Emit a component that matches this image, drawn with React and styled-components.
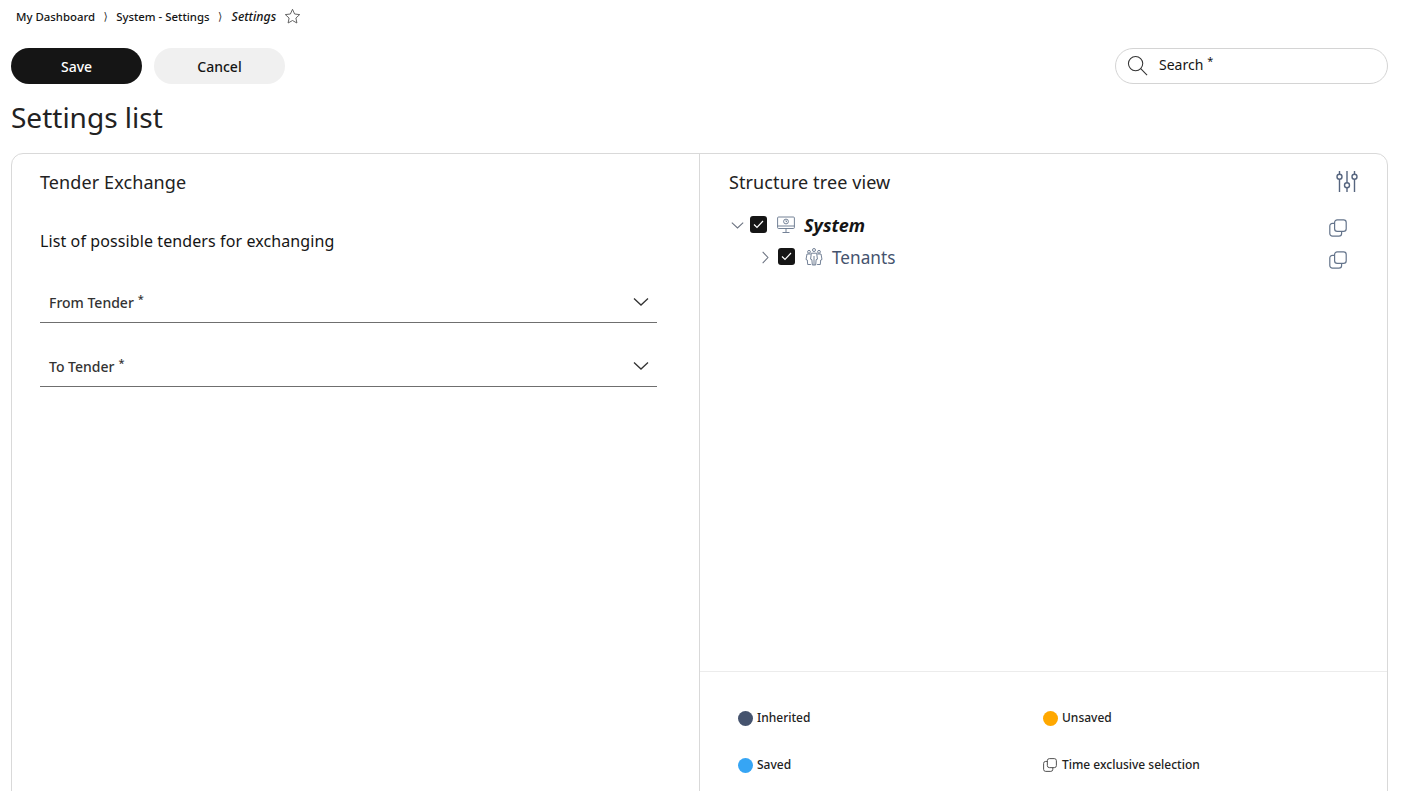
import React from 'react';
import styled, { createGlobalStyle } from 'styled-components';

const Global = createGlobalStyle`
  html, body {
    margin: 0;
    padding: 0;
    height: 100%;
    overflow: hidden;
    background: #fff;
    font-family: "Noto Sans", sans-serif;
    color: #151515;
  }
`;

const Page = styled.div`
  width: 1406px;
  height: 791px;
  overflow: hidden;
  box-sizing: border-box;
  padding: 0 18px 0 11px;
`;

const Crumbs = styled.nav`
  display: flex;
  align-items: center;
  height: 33px;
  padding-left: 5px;
  font-size: 11.4px;
  font-weight: 500;
`;

const Crumb = styled.span`
  font-style: ${p => (p.$current ? 'italic' : 'normal')};
  font-size: ${p => (p.$current ? '12.3px' : 'inherit')};
  margin-left: ${p => (p.$current ? '1px' : '0')};
`;

const Sep = styled.span`
  width: 21px;
  text-align: center;
  font-size: 11px;
  font-family: "DejaVu Sans", sans-serif;
  color: #333;
`;

const StarWrap = styled.span`
  display: flex;
  margin-left: 8px;
`;

const Toolbar = styled.div`
  display: flex;
  align-items: center;
  gap: 12px;
  margin-top: 15px;
  height: 36px;
`;

const Button = styled.button`
  width: 131px;
  height: 36px;
  border: none;
  border-radius: 18px;
  font: 500 14px "Noto Sans", sans-serif;
  background: ${p => (p.$primary ? '#151515' : '#f0f0f0')};
  color: ${p => (p.$primary ? '#fff' : '#151515')};
`;

const SearchBox = styled.div`
  margin-left: auto;
  width: 273px;
  height: 36px;
  box-sizing: border-box;
  border: 1px solid #d4d4d4;
  border-radius: 18px;
  display: flex;
  align-items: center;
  gap: 11px;
  padding: 0 0 2px 11px;
  font-size: 14px;
  line-height: 18px;
`;

const Req = styled.sup`
  font-size: 11px;
  line-height: 0;
  margin-left: 4px;
  vertical-align: 5px;
`;

const Title = styled.h1`
  margin: 15px 0 17px;
  font-size: 28px;
  font-weight: 400;
  line-height: 37px;
  color: #222;
`;

const Card = styled.section`
  display: grid;
  grid-template-columns: 688px 1fr;
  height: 700px;
  box-sizing: border-box;
  border: 1px solid #d9d9d9;
  border-radius: 12px;
`;

const LeftPane = styled.div`
  padding: 16px 42px 0 28px;
  border-right: 1px solid #d9d9d9;
`;

const RightPane = styled.div`
  display: flex;
  flex-direction: column;
  min-height: 0;
`;

const PaneTitle = styled.h2`
  margin: 0;
  font-size: 18px;
  font-weight: 400;
  letter-spacing: 0.1px;
  line-height: 25px;
  color: #222;
`;

const SubTitle = styled.div`
  margin: 34px 0 32px;
  font-size: 16px;
  font-weight: 400;
  letter-spacing: 0.1px;
  line-height: 24px;
`;

const Select = styled.div`
  display: flex;
  align-items: center;
  justify-content: space-between;
  height: 38px;
  box-sizing: border-box;
  padding: 0 8px 2px 9px;
  margin-bottom: 26px;
  border-bottom: 1px solid #6f6f6f;
  font-size: 14px;
  font-weight: 500;
  color: #333;
`;

const SelectArrow = styled.span`
  display: flex;
  margin-bottom: 2px;
`;

const TreeArea = styled.div`
  flex: 1;
  padding: 16px 28px 0 29px;
`;

const TreeHead = styled.div`
  display: flex;
  align-items: flex-start;
  justify-content: space-between;
  height: 25px;
  margin-bottom: 14px;
`;

const TreeTools = styled.span`
  display: flex;
  margin-top: -1px;
`;

const TreeRow = styled.div`
  display: flex;
  align-items: center;
  height: 32px;
  padding-left: ${p => p.$depth * 28}px;
`;

const Chevron = styled.span`
  width: 21px;
  box-sizing: border-box;
  padding: 1px 0 0 2px;
  display: flex;
  align-items: center;
  color: #6b7280;
`;

const Check = styled.span`
  width: 17px;
  height: 17px;
  border-radius: 3px;
  background: #151515;
  display: flex;
  align-items: center;
  justify-content: center;
  margin: 0 10px 2px 0;
`;

const NodeIcon = styled.span`
  width: 20px;
  display: flex;
  margin-right: 7px;
  color: #64748b;
`;

const NodeLabel = styled.span`
  font-size: ${p => (p.$root ? '18px' : '17.2px')};
  font-style: ${p => (p.$root ? 'italic' : 'normal')};
  font-weight: ${p => (p.$root ? 700 : 400)};
  color: ${p => (p.$root ? '#151515' : '#45536e')};
`;

const CopyWrap = styled.span`
  margin: 6px 12px 0 auto;
  display: flex;
  color: #64748b;
`;

const Legend = styled.div`
  height: 181px;
  box-sizing: border-box;
  border-top: 1px solid #ececec;
  padding: 36px 0 0 38px;
  display: grid;
  grid-template-columns: 305px 1fr;
  grid-auto-rows: 47px;
  font-size: 12px;
  font-weight: 500;
  color: #222;
`;

const LegendItem = styled.div`
  display: flex;
  align-items: flex-start;
  gap: 4px;
  line-height: 20px;
`;

const Dot = styled.span`
  width: 15px;
  height: 15px;
  margin-top: 3px;
  border-radius: 50%;
  background: ${p => p.$color};
`;

const LegendIcon = styled.span`
  width: 15px;
  height: 15px;
  margin-top: 3px;
  display: flex;
  color: #444;
`;

const CopyIcon = ({ size = 18 }) => (
  <svg width={size} height={size} viewBox="0 0 18 18" fill="none" stroke="currentColor" strokeWidth="1.2">
    <rect x="5.6" y="0.8" width="11.6" height="11.6" rx="2.6" />
    <path d="M5.6 4.4H3.4A2.6 2.6 0 0 0 .8 7v7.6a2.6 2.6 0 0 0 2.6 2.6H10a2.6 2.6 0 0 0 2.6-2.6v-2.2" />
  </svg>
);

const ChevronDown = ({ size = 16, color = 'currentColor' }) => (
  <svg width={size} height={size} viewBox="0 0 16 16" fill="none" stroke={color} strokeWidth="1.3">
    <path d="M1 4.5l7 6.5 7-6.5" />
  </svg>
);

const ChevronRight = ({ size = 13 }) => (
  <svg width={size} height={size} viewBox="0 0 16 16" fill="none" stroke="currentColor" strokeWidth="1.3">
    <path d="M4.5 1l6.500 7-6.500 7" />
  </svg>
);

const Tick = () => (
  <svg width="11" height="9" viewBox="0 0 11 9" fill="none" stroke="#fff" strokeWidth="1.2">
    <path d="M1 4.5l3 3L10 1" />
  </svg>
);

const StarIcon = () => (
  <svg width="17" height="17" viewBox="0 0 17 17" fill="none" stroke="#555" strokeWidth="0.9">
    <path d="M8.5 1.3l2.1 4.7 5.1.6-3.8 3.4 1 5-4.4-2.5L4.1 15l1-5L1.3 6.6l5.1-.6z" />
  </svg>
);

const SearchIcon = () => (
  <svg width="21" height="21" viewBox="0 0 22 22" fill="none" stroke="#333" strokeWidth="1.1">
    <circle cx="9" cy="9" r="7.5" />
    <path d="M14.4 14.4L21 21" />
  </svg>
);

const SlidersIcon = () => (
  <svg width="24" height="24" viewBox="0 0 24 24" fill="none" stroke="#56657f" strokeWidth="1.4">
    <path d="M4.5 2v3.200M4.500 10.200V23M12 2v11.700M12 18.700V23M19.500 2v3.200M19.500 10.200V23" />
    <circle cx="4.500" cy="7.700" r="2.500" />
    <circle cx="12" cy="16.200" r="2.500" />
    <circle cx="19.500" cy="7.700" r="2.500" />
  </svg>
);

const MonitorIcon = () => (
  <svg width="18" height="18" viewBox="0 0 18 18" fill="none" stroke="currentColor" strokeWidth="0.9">
    <rect x="0.6" y="1" width="16.800" height="11.500" rx="1" />
    <path d="M0.6 10h16.800M9 12.500v3.500M5.500 16.500h7" />
    <circle cx="9" cy="5.500" r="2.400" />
    <path d="M9 4.300v1.300h1" />
  </svg>
);

const PeopleIcon = () => (
  <svg width="18" height="18" viewBox="0 0 18 18" fill="none" stroke="currentColor" strokeWidth="0.9">
    <circle cx="9" cy="2" r="1.500" />
    <circle cx="4" cy="3.800" r="1.400" />
    <circle cx="14" cy="3.800" r="1.400" />
    <path d="M6.300 5.200h5.400l.7 6-1.300.5-.4 5.300H7.300l-.4-5.300-1.300-.5zM9 8v9" />
    <path d="M5.800 6H2L1 11.500l1.300.5.400 4.500h3.200M12.200 6H16l1 5.500-1.300.5-.4 4.500h-3.200" />
  </svg>
);

const tree = [
  { label: 'System', depth: 0, root: true, open: true, icon: <MonitorIcon /> },
  { label: 'Tenants', depth: 1, icon: <PeopleIcon /> },
];

export default function App() {
  return (
    <Page>
      <Global />
      <Crumbs>
        <Crumb>My Dashboard</Crumb>
        <Sep>⟩</Sep>
        <Crumb>System - Settings</Crumb>
        <Sep>⟩</Sep>
        <Crumb $current>Settings</Crumb>
        <StarWrap><StarIcon /></StarWrap>
      </Crumbs>
      <Toolbar>
        <Button $primary>Save</Button>
        <Button>Cancel</Button>
        <SearchBox>
          <SearchIcon />
          <span>Search<Req>*</Req></span>
        </SearchBox>
      </Toolbar>
      <Title>Settings list</Title>
      <Card>
        <LeftPane>
          <PaneTitle>Tender Exchange</PaneTitle>
          <SubTitle>List of possible tenders for exchanging</SubTitle>
          <Select>
            <span>From Tender<Req>*</Req></span>
            <SelectArrow><ChevronDown color="#333" /></SelectArrow>
          </Select>
          <Select>
            <span>To Tender<Req>*</Req></span>
            <SelectArrow><ChevronDown color="#333" /></SelectArrow>
          </Select>
        </LeftPane>
        <RightPane>
          <TreeArea>
            <TreeHead>
              <PaneTitle>Structure tree view</PaneTitle>
              <TreeTools><SlidersIcon /></TreeTools>
            </TreeHead>
            {tree.map(node => (
              <TreeRow key={node.label} $depth={node.depth}>
                <Chevron>{node.open ? <ChevronDown size={13} /> : <ChevronRight />}</Chevron>
                <Check><Tick /></Check>
                <NodeIcon>{node.icon}</NodeIcon>
                <NodeLabel $root={node.root}>{node.label}</NodeLabel>
                <CopyWrap><CopyIcon /></CopyWrap>
              </TreeRow>
            ))}
          </TreeArea>
          <Legend>
            <LegendItem><Dot $color="#45536e" />Inherited</LegendItem>
            <LegendItem><Dot $color="#ffa800" />Unsaved</LegendItem>
            <LegendItem><Dot $color="#36a5f4" />Saved</LegendItem>
            <LegendItem><LegendIcon><CopyIcon size={14} /></LegendIcon>Time exclusive selection</LegendItem>
          </Legend>
        </RightPane>
      </Card>
    </Page>
  );
}
